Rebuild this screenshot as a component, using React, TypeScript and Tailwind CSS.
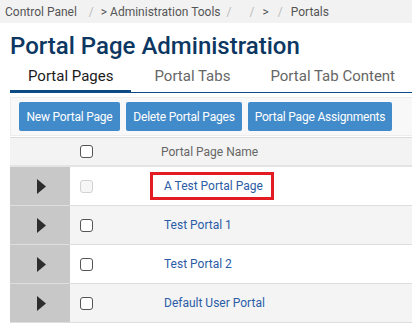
const rows = [
    { name: 'A Test Portal Page', disabled: true, highlight: true },
    { name: 'Test Portal 1' },
    { name: 'Test Portal 2' },
    { name: 'Default User Portal' },
]

const buttons = [
    { label: 'New Portal Page', w: 'w-[101px]' },
    { label: 'Delete Portal Pages', w: 'w-[116px]' },
    { label: 'Portal Page Assignments', w: 'w-[144px]' },
]

function Arrow() {
    return (
        <svg width="9" height="15" viewBox="0 0 9 15" className="ml-[3px]">
            <path d="M0 0 L9 7.5 L0 15 Z" fill="#2d2d2d" />
        </svg>
    )
}

export default function App() {
    return (
        <div className="w-[412px] h-[323px] overflow-hidden bg-white font-['Roboto',sans-serif]">
            {/* breadcrumb */}
            <div className="h-[23px] bg-[#f2f2f2] flex items-center pl-[5px] text-[12px] text-[#555] whitespace-nowrap">
                <span>Control Panel</span>
                <span className="ml-[12px] text-[#bbb]">/</span>
                <span className="ml-[7px]">&gt; Administration Tools</span>
                <span className="ml-[6px] text-[#bbb]">/</span>
                <span className="ml-[18px] text-[#bbb]">/</span>
                <span className="ml-[8px]">&gt;</span>
                <span className="ml-[9px] text-[#bbb]">/</span>
                <span className="ml-[8px]">Portals</span>
            </div>

            <div className="pl-[10px]">
                <h1 className="mt-[9px] text-[24px] leading-[28px] font-medium text-[#0c3762] whitespace-nowrap">
                    Portal Page Administration
                </h1>

                {/* tabs */}
                <div className="flex border-b border-[#0c4a85] whitespace-nowrap text-[15px] leading-[20px] mt-[1px]">
                    <div className="h-[32px] -mb-[1px] px-[18px] pt-[5px] text-[#1b1b1b] border-b-[3px] border-[#0c4a85]">Portal Pages</div>
                    <div className="h-[31px] ml-[5px] px-[18px] pt-[5px] text-[#666]">Portal Tabs</div>
                    <div className="h-[31px] ml-[4px] px-[18px] pt-[5px] text-[#666]">Portal Tab Content</div>
                </div>

                {/* toolbar */}
                <div className="mt-[4px] bg-[#f8f8f8] border border-[#ededed] border-r-0 px-[8px] py-[4px] flex gap-[6px] whitespace-nowrap text-[12px] tracking-[-0.2px]">
                    {buttons.map((b) => (
                        <button key={b.label} className={`${b.w} h-[29px] rounded-[2px] bg-[#428bca] text-white`}>
                            {b.label}
                        </button>
                    ))}
                </div>

                {/* table */}
                <div className="mt-[1px]">
                    <div className="h-[30px] bg-[#f3f3f3] border-t border-[#dcdcdc] border-b-2 border-b-[#e4e4e4] flex items-center">
                        <div className="w-[60px]" />
                        <div className="w-[80px] pl-[10px] flex items-center">
                            <span className="w-[13px] h-[13px] rounded-[3px] border border-[#555] bg-white" />
                        </div>
                        <span className="ml-[11px] text-[12px] text-[#666]">Portal Page Name</span>
                    </div>
                    {rows.map((r, i) => (
                        <div key={r.name} className={`h-[39px] flex border-b border-[#dedede] ${i % 2 ? 'bg-[#f4f4f4]' : 'bg-white'}`}>
                            <div className="w-[60px] bg-[#c8c8c8] flex items-center justify-center">
                                <Arrow />
                            </div>
                            <div className="w-[80px] pl-[10px] flex items-center">
                                <span className={`w-[13px] h-[13px] rounded-[3px] border ${r.disabled ? 'border-[#d2d2d2] bg-[#f6f6f6]' : 'border-[#555] bg-white'}`} />
                            </div>
                            <div className="flex items-center">
                                {r.highlight ? (
                                    <span className="border-[3px] border-[#e31b23] pl-[11px] pr-[8px] h-[28px] flex items-center text-[12px] text-[#2b5ca6]">
                                        {r.name}
                                    </span>
                                ) : (
                                    <span className="ml-[14px] text-[12px] text-[#2b5ca6]">{r.name}</span>
                                )}
                            </div>
                        </div>
                    ))}
                </div>
            </div>
        </div>
    )
}
